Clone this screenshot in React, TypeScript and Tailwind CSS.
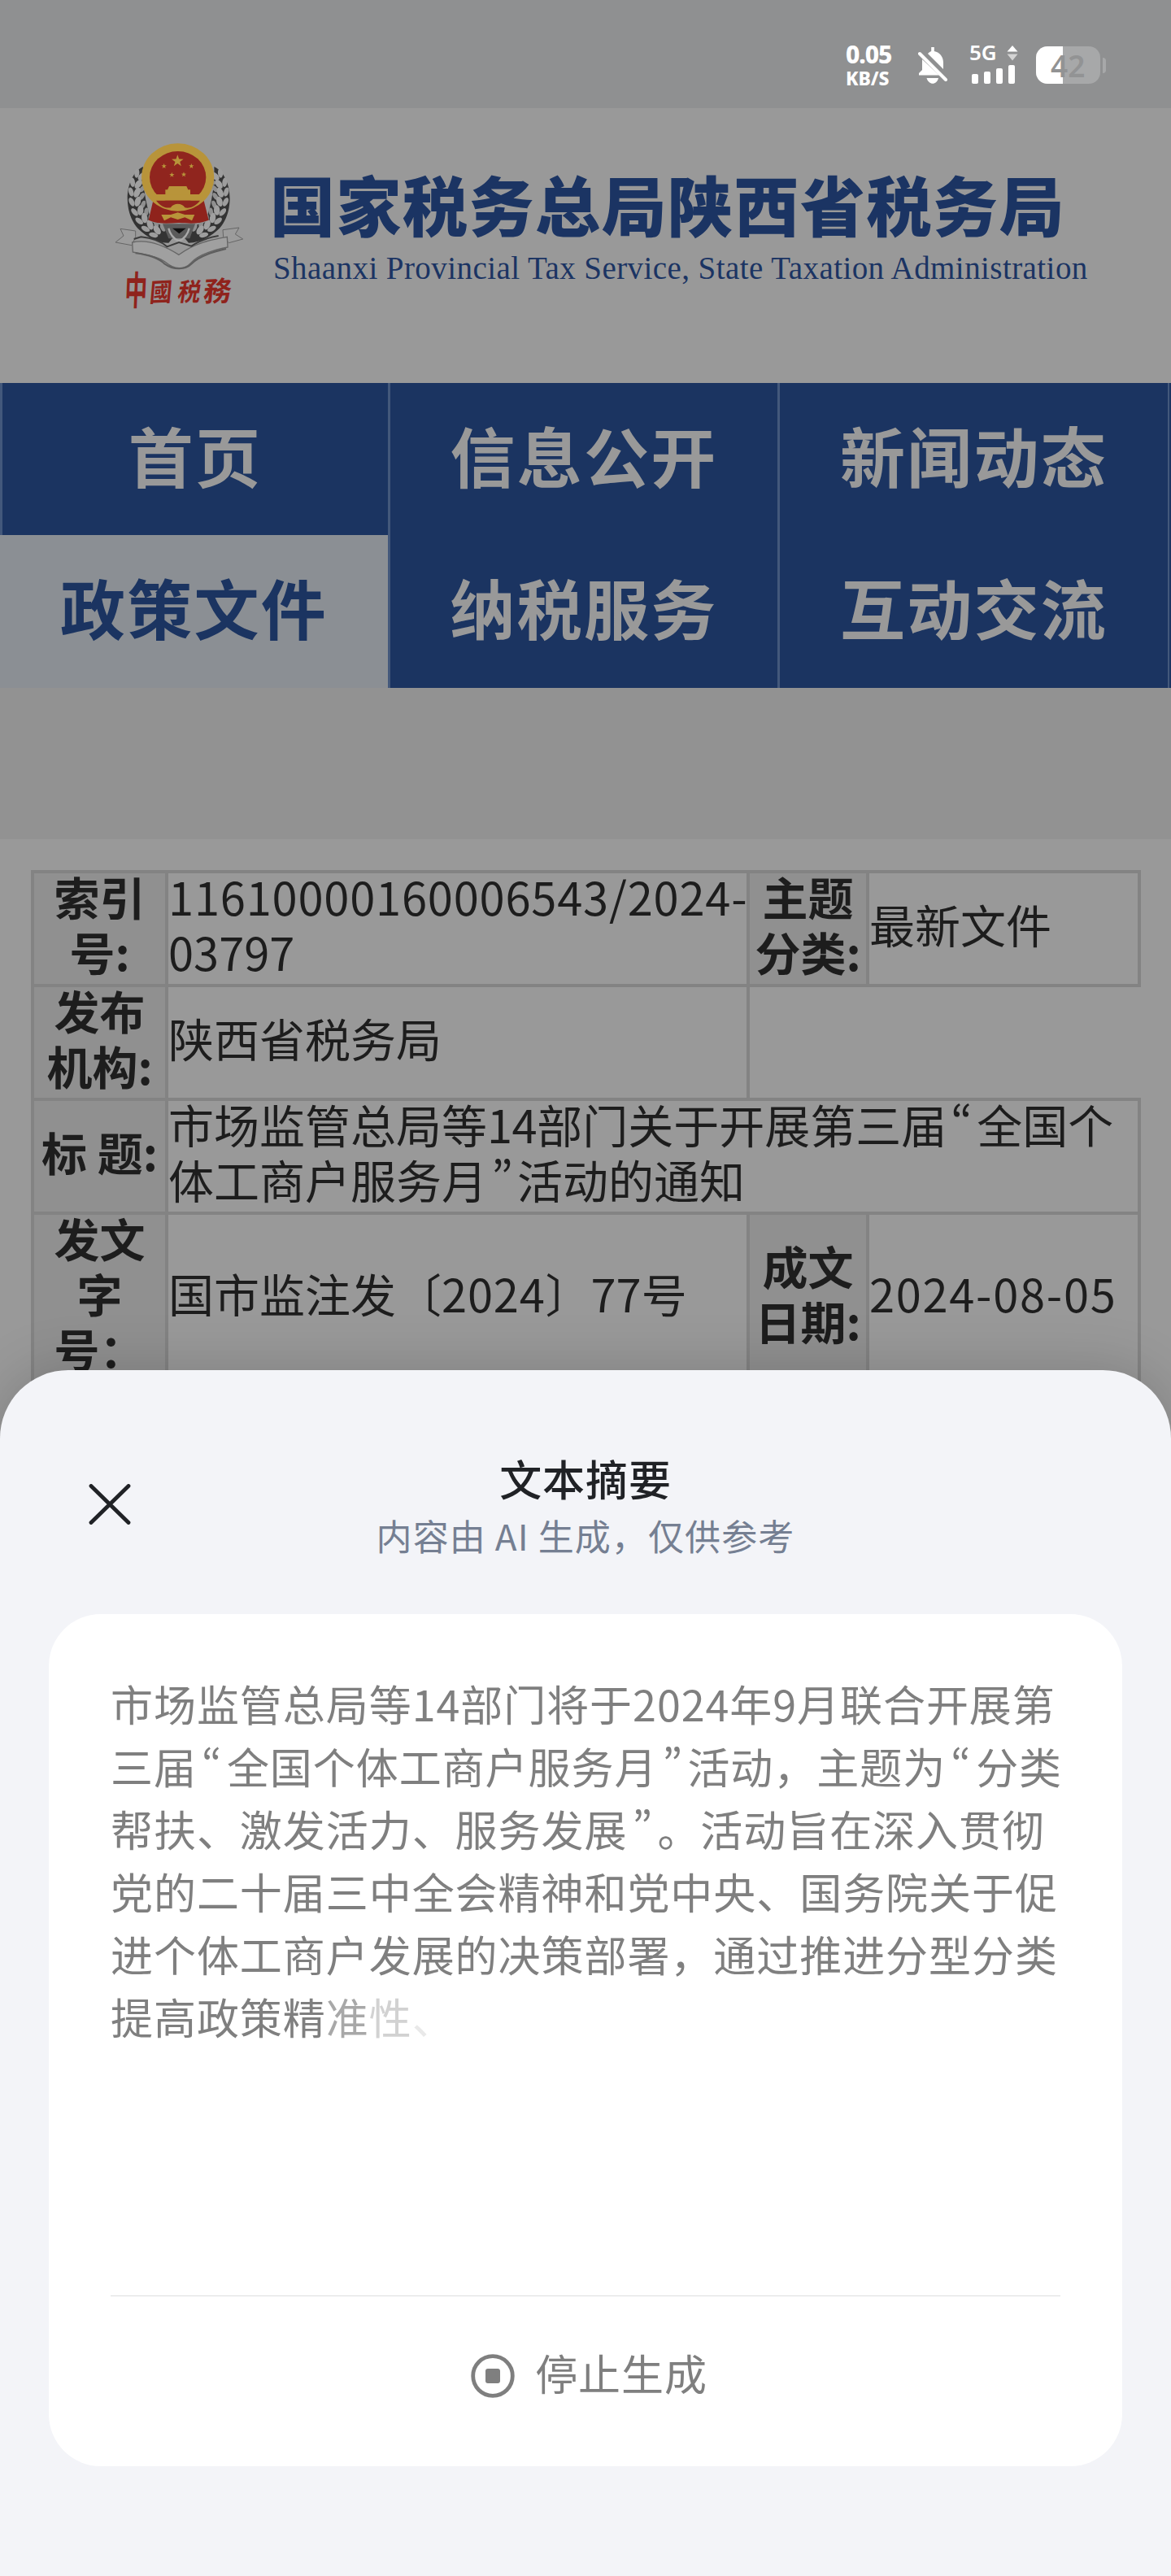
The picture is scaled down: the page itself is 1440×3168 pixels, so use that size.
import React from 'react';

// Curly quotes are narrower than a full-width character
const Quote = ({ children }: { children: string }) => (
  <span className="inline-block w-[37px] text-center align-top tracking-normal [font-feature-settings:'pwid']">{children}</span>
);

const leaves = [
  { x: 152, y: 190, r: 25 },
  { x: 136, y: 222, r: 12 },
  { x: 130, y: 256, r: 2 },
  { x: 132, y: 292, r: -8 },
  { x: 142, y: 328, r: -22 },
  { x: 158, y: 360, r: -34 },
  { x: 180, y: 388, r: -46 },
  { x: 208, y: 410, r: -58 },
];

const LeafSide = () => (
  <g>
    <path d="M168 165 C98 200 92 330 148 392 C185 428 225 446 262 446 L300 400 L200 370 C180 310 165 240 168 165Z" fill="#333" />
    {leaves.map((leaf) => (
      <g key={leaf.y} transform={`translate(${leaf.x} ${leaf.y}) rotate(${leaf.r})`}>
        <ellipse cx="-7" cy="0" rx="9" ry="17" fill="#9d9d9d" transform="rotate(-18)" />
        <ellipse cx="16" cy="-3" rx="11" ry="19" fill="#a0a0a0" transform="rotate(24)" />
        <ellipse cx="38" cy="-2" rx="8" ry="15" fill="#8f8f8f" transform="rotate(30)" />
      </g>
    ))}
  </g>
);

const star = 'M0 -10 L2.4 -3.2 L9.5 -3 L3.8 1.3 L5.9 8.1 L0 4 L-5.9 8.1 L-3.8 1.3 L-9.5 -3 L-2.4 -3.2Z';

const Emblem = () => (
  <svg viewBox="0 0 720 750" className="h-[250px] w-[240px] shrink-0">
    <LeafSide />
    <g transform="translate(598 0) scale(-1 1)">
      <LeafSide />
    </g>
    <path d="M205 290 L188 362 C225 378 260 374 300 372 C340 374 370 378 410 362 L392 290Z" fill="#8f231c" />
    <ellipse cx="296" cy="204" rx="134" ry="125" fill="#b8943a" />
    <ellipse cx="296" cy="204" rx="104" ry="96" fill="#90251e" />
    <path d="M208 267 H384 L372 290 H220Z" fill="#b8943a" />
    <path d="M250 262 V250 H258 L264 237 H328 L334 250 H342 V268 H250Z" fill="#b8943a" />
    <path d="M216 290 H378 C360 312 340 320 322 316 C312 298 280 298 270 316 C248 320 232 310 216 290Z" fill="#90251e" />
    <path d="M235 342 L270 342 L296 334 L322 342 L358 342 L348 364 L322 352 L296 360 L270 352 L246 364Z" fill="#b8943a" />
    <path d={star} transform="translate(295 144) scale(2.3)" fill="#b8943a" />
    <path d={star} transform="translate(245 163)" fill="#b8943a" />
    <path d={star} transform="translate(346 163)" fill="#b8943a" />
    <path d={star} transform="translate(274 195)" fill="#b8943a" />
    <path d={star} transform="translate(318 194)" fill="#b8943a" />
    <path d="M240 376 H360 L340 430 H262Z" fill="#5b5b5b" />
    <path d="M276 392 H326 L301 412Z" fill="#111" />
    <path d="M262 392 C268 420 284 432 300 440 C316 432 332 420 338 392" fill="none" stroke="#aaa" strokeWidth="7" />
    {/* ribbon */}
    <path d="M140 402 L84 394 L96 420 L66 444 L126 455 L140 425Z" fill="#9c9c9c" stroke="#666" strokeWidth="3" />
    <path d="M462 398 L522 390 L508 414 L536 432 L484 446 L464 424Z" fill="#9c9c9c" stroke="#666" strokeWidth="3" />
    <path d="M128 444 C180 432 240 452 300 490 C358 446 420 434 478 424 L480 462 C420 474 372 490 344 520 C320 546 282 544 254 520 C222 494 176 490 130 480Z" fill="#a0a0a0" stroke="#666" strokeWidth="4" />
    <path d="M134 432 L160 424 C200 428 236 442 256 460 L300 444 L346 458 C372 440 410 426 446 420" fill="none" stroke="#3c3c3c" strokeWidth="6" />
    <path d="M140 484 C190 490 222 500 248 524 C282 548 324 546 348 522 C376 494 420 480 474 468" fill="none" stroke="#5e5e5e" strokeWidth="6" />
    <g fill="#8f231c" fontFamily="'Noto Sans CJK TC', sans-serif" fontWeight="700">
      <text transform="translate(98 676) scale(.8 1.4) skewX(-4)" fontSize="104">中</text>
      <text transform="translate(190 664) skewX(-8) rotate(-3) scale(1 1.15)" fontSize="82">國</text>
      <text transform="translate(292 660) skewX(-10) scale(1 1.1)" fontSize="84">税</text>
      <text transform="translate(388 664) skewX(-8) rotate(-3)" fontSize="102">務</text>
    </g>
  </svg>
);

const StatusBar = () => (
  <div className="flex h-[133px] bg-[#8f9091] pl-[1040px] text-white">
    <div className="w-[58px] pt-[52px] font-['Noto_Sans']">
      <div className="text-[30px]/[30px] font-extrabold tracking-[-1.1px]">0.05</div>
      <div className="mt-[2px] text-[23px]/[24px] font-extrabold tracking-[-0.1px]">KB/S</div>
    </div>
    <svg viewBox="0 0 36 46" className="mt-[58px] ml-[31px] h-[46px] w-[36px]">
      <path d="M16.2 0 h3.6 v5 C27 6.500 31 12 31 19 V27 L12 8 C13.200 6.500 14.700 5.500 16.200 5Z" fill="#fff" />
      <path d="M5 15 L26 34.500 H1 V32 L5 28Z" fill="#fff" />
      <path d="M2 8 L34 40" stroke="#fff" strokeWidth="4" strokeLinecap="round" />
      <path d="M10.500 38 H25 C23 47 13 47 10.500 38Z" fill="#fff" />
    </svg>
    <div className="ml-[27px] w-[60px] pt-[51px]">
      <div className="flex h-[27px]">
        <span className="w-[46px] font-['Noto_Sans'] text-[26px]/[27px] font-semibold tracking-[-0.2px]">5G</span>
        <svg viewBox="0 0 14 19" className="mt-[5px] h-[19px] w-[14px]">
          <path d="M7 0 L13.500 7.500 H0.500Z" fill="#fff" />
          <path d="M7 18.500 L13.500 10.500 H0.500Z" fill="#d4d4d4" />
        </svg>
      </div>
      <div className="flex h-[25px] items-end gap-[7px] pl-[3px]">
        <i className="h-[12px] w-[8px] rounded-[2px] bg-white" />
        <i className="h-[15px] w-[8px] rounded-[2px] bg-white" />
        <i className="h-[19px] w-[8px] rounded-[2px] bg-white" />
        <i className="h-[23px] w-[8px] rounded-[2px] bg-white" />
      </div>
    </div>
    <div className="mt-[57px] ml-[22px] flex items-center self-start">
      <div className="relative h-[46px] w-[79px] rounded-[14px] bg-[#a7a8a9]">
        <div className="absolute inset-y-0 left-0 w-[33px] rounded-l-[14px] bg-white" />
        <div className="relative pl-[18px] font-['Noto_Sans'] text-[37px]/[48px] font-semibold text-[#929394]">42</div>
      </div>
      <i className="ml-[3px] h-[19px] w-[4px] rounded-r-[4px] bg-[#a7a8a9]" />
    </div>
  </div>
);

const SiteHeader = () => (
  <header className="flex h-[338px] pt-[17px] pl-[120px] text-[#1b3463]">
    <Emblem />
    <div className="pt-[40px]">
      <h1 className="-ml-[28px] text-[80px]/[118px] font-black tracking-[1.5px] whitespace-nowrap">国家税务总局陕西省税务局</h1>
      <p className="-ml-[24px] font-['Liberation_Serif'] text-[39px]/[44px] tracking-[0.43px] whitespace-nowrap">
        Shaanxi Provincial Tax Service, State Taxation Administration
      </p>
    </div>
  </header>
);

const navItems = ['首页', '信息公开', '新闻动态', '政策文件', '纳税服务', '互动交流'];

const MainNav = () => (
  <nav className="grid h-[375px] grid-cols-[477px_479px_480px_4px] grid-rows-[187px_188px] bg-[#1b3461] text-[80px] font-bold tracking-[2.3px]">
    {navItems.map((item, i) => (
      <React.Fragment key={item}>
        <a
          className={
            item === '政策文件'
              ? 'flex items-center justify-center bg-[#8b8f94] pb-[14px] text-[#1b3461]'
              : 'flex items-center justify-center border-l-3 border-[#43587b] pb-[14px] text-[#999]'
          }
        >
          {item}
        </a>
        {i % 3 === 2 && <span className="border-l-2 border-[#43587b]" />}
      </React.Fragment>
    ))}
  </nav>
);

const cell = 'border-4 border-[#838383] p-0';
const label = 'border-4 border-[#838383] bg-[#909090] p-0 text-center font-bold';

const DocTable = () => (
  <table className="mt-[38px] ml-[38px] w-[1365px] table-fixed border-collapse text-[56px]/[68px] text-[#1d1d1d]">
    <colgroup>
      <col className="w-[165px]" />
      <col className="w-[715px]" />
      <col className="w-[147px]" />
      <col className="w-[334px]" />
    </colgroup>
    <tbody>
      <tr className="h-[140px]">
        <td className={label}><div className="-mt-3">索引<br />号:</div></td>
        <td className={cell}>
          <div className="-mt-3 whitespace-nowrap">
            <span className="tracking-[0.8px]">11610000160006543/2024-</span><br />03797
          </div>
        </td>
        <td className={label}><div className="-mt-3 whitespace-nowrap">主题<br />分类:</div></td>
        <td className={cell}><div className="-mt-3">最新文件</div></td>
      </tr>
      <tr className="h-[140px]">
        <td className={label}><div className="-mt-3 whitespace-nowrap">发布<br />机构:</div></td>
        <td className={cell}><div className="-mt-3">陕西省税务局</div></td>
      </tr>
      <tr className="h-[140px]">
        <td className={label}><div className="-mt-3 whitespace-nowrap">标 题:</div></td>
        <td className={cell} colSpan={3}>
          <div className="-mt-3 whitespace-nowrap">
            市场监管总局等<span className="tracking-[-0.5px]">14</span>部门关于开展第三届<Quote>“</Quote>全国个<br />
            体工商户服务月<Quote>”</Quote>活动的通知
          </div>
        </td>
      </tr>
      <tr className="h-[208px]">
        <td className={label}><div className="-mt-3 whitespace-nowrap">发文<br />字<br />号：</div></td>
        <td className={cell}><div className="-mt-3">国市监注发〔<span className="tracking-[0.8px]">2024</span>〕77号</div></td>
        <td className={label}><div className="-mt-3 whitespace-nowrap">成文<br />日期:</div></td>
        <td className={cell}><div className="-mt-3 tracking-[1.700px] whitespace-nowrap">2024-08-05</div></td>
      </tr>
    </tbody>
  </table>
);

const SummarySheet = () => (
  <section className="absolute inset-x-0 bottom-0 h-[1483px] rounded-t-[84px] bg-[#f3f4f8] px-[60px] shadow-[0_0_70px_rgba(0,0,0,0.18)]">
    <div className="grid h-[300px] grid-cols-[300px_1fr_300px]">
      <svg viewBox="0 0 52 50" className="mt-[140px] ml-[49px] h-[50px] w-[52px]" fill="none" stroke="#202226" strokeWidth="4.800" strokeLinecap="round">
        <path d="M3 2.500 L49 47.500 M49 2.500 L3 47.500" />
      </svg>
      <div className="pt-[98px] text-center">
        <h2 className="text-[52px]/[70px] font-medium tracking-[0.92px] text-[#202226]">文本摘要</h2>
        <p className="text-[44px]/[70px] tracking-[1.1px] whitespace-nowrap text-[#757f92]">内容由 AI 生成，仅供参考</p>
      </div>
    </div>
    <div className="flex h-[1048px] flex-col rounded-[64px] bg-white px-[76px] text-[52px] text-[#7f7f7f]">
      <p className="flex-1 pt-[71px] leading-[77px] tracking-[0.95px] whitespace-nowrap">
        市场监管总局等14部门将于2024年9月联合开展第<br />
        三届<Quote>“</Quote>全国个体工商户服务月<Quote>”</Quote>活动，主题为<Quote>“</Quote>分类<br />
        帮扶、激发活力、服务发展<Quote>”</Quote>。活动旨在深入贯彻<br />
        党的二十届三中全会精神和党中央、国务院关于促<br />
        进个体工商户发展的决策部署，通过推进分型分类<br />
        提高政策精<span className="text-[#a8a8a8]">准</span><span className="text-[#d2d2d2]">性</span><span className="text-[#e9e9e9]">、</span>
      </p>
      <button className="flex h-[210px] items-center justify-center border-t border-[#dcdedf] pb-[15px] pl-[9px] tracking-[0.92px]">
        <svg viewBox="0 0 54 54" className="mt-[1px] mr-[25px] h-[54px] w-[54px]">
          <circle cx="27" cy="27" r="24.300" fill="none" stroke="#7f7f7f" strokeWidth="4.800" />
          <rect x="18" y="18" width="18" height="18" rx="3" fill="#7f7f7f" />
        </svg>
        <span className="-mt-[6px]">停止生成</span>
      </button>
    </div>
  </section>
);

export default function App() {
  return (
    <div lang="zh-CN" className="relative h-[3168px] w-[1440px] overflow-hidden bg-[#999] font-['Noto_Sans_CJK_SC',sans-serif]">
      <StatusBar />
      <SiteHeader />
      <MainNav />
      <div className="h-[186px] bg-[#929292]" />
      <DocTable />
      <SummarySheet />
    </div>
  );
}
